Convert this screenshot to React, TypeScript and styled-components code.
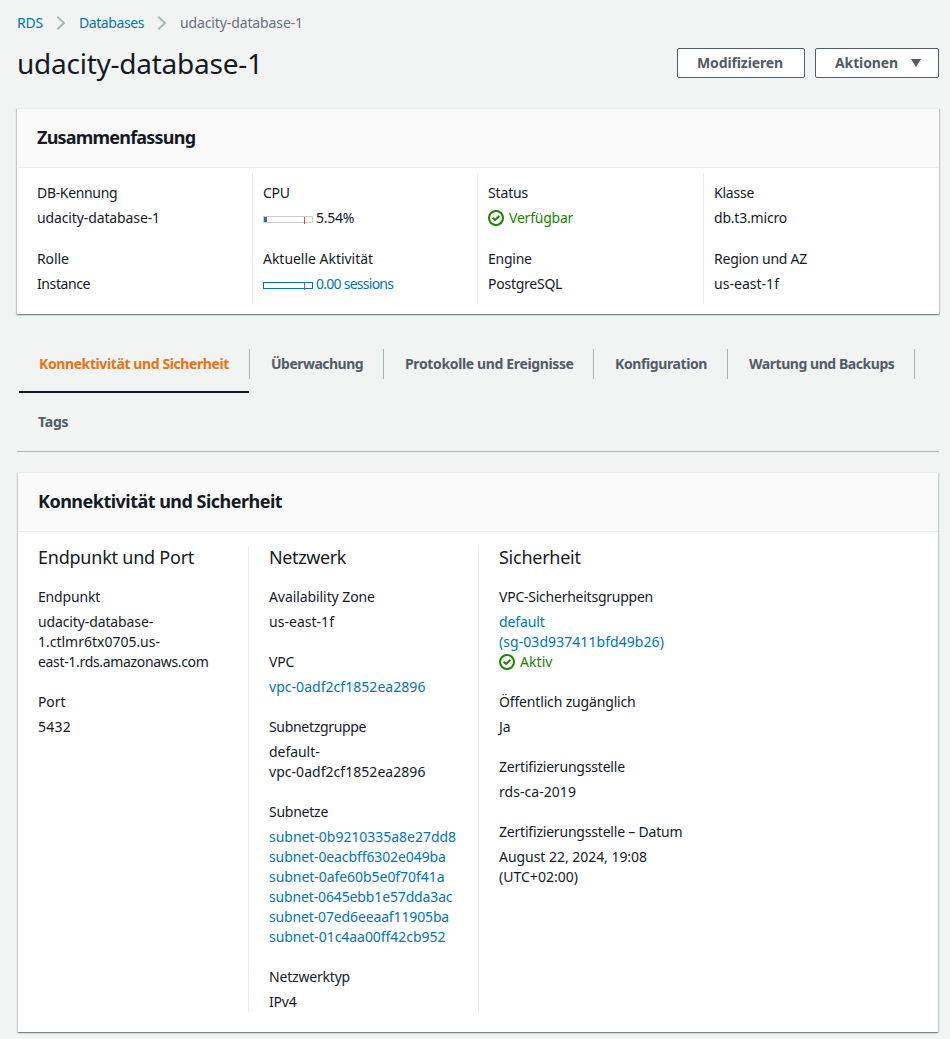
import React from "react";
import styled, { createGlobalStyle, css } from "styled-components";

const GlobalStyle = createGlobalStyle`
  *, *::before, *::after { box-sizing: border-box; }
  body {
    margin: 0;
    background: #f2f3f3;
    color: #16191f;
    font: 400 14px/20px "Noto Sans", "Open Sans", sans-serif;
    font-kerning: normal;
    overflow: hidden;
  }
`;

const Page = styled.main`
  width: 950px;
  height: 1039px;
  padding: 13px 11px 0 17px;
  overflow: hidden;
`;

/* letter-spacing in px, tuned for each label */
type Tracked = { $t?: number };
const tracking = css<Tracked>`
  letter-spacing: ${(p) => p.$t ?? -0.15}px;
`;

const Breadcrumbs = styled.nav`
  display: flex;
  align-items: center;
  height: 20px;
  color: #687078;
`;
const Crumb = styled.span<Tracked & { $link?: boolean; $width?: number }>`
  ${tracking}
  color: ${(p) => (p.$link ? "#0073bb" : "#687078")};
  width: ${(p) => (p.$width ? `${p.$width}px` : "auto")};
  white-space: nowrap;
`;
const CrumbArrow = styled.svg`
  width: 10px;
  height: 16px;
  margin: 0 13px 0 13px;
  flex: none;
`;

const TitleBar = styled.header`
  display: flex;
  justify-content: space-between;
  align-items: center;
  height: 36px;
  margin-top: 12px;
`;
const Title = styled.h1<Tracked>`
  ${tracking}
  margin: 0;
  font-size: 28px;
  line-height: 36px;
  font-weight: 400;
`;
const Actions = styled.div`
  display: flex;
  gap: 10px;
`;
const Button = styled.button<Tracked & { $width: number }>`
  ${tracking}
  display: flex;
  align-items: center;
  gap: 13px;
  width: ${(p) => p.$width}px;
  height: 30px;
  padding: 0 0 0 19px;
  border: 1px solid #545b64;
  border-radius: 2px;
  background: #fff;
  color: #545b64;
  font-family: inherit;
  font-size: 14px;
  font-weight: 700;
  line-height: 20px;
`;
const Caret = styled.svg`
  width: 10px;
  height: 8px;
`;

const Panel = styled.section<{ $inset?: boolean }>`
  margin: ${(p) => (p.$inset ? "20px 1px 0" : "27px 0 0")};
  height: ${(p) => (p.$inset ? 560 : 206)}px;
  border-top: 1px solid #eaeded;
  background: #fff;
  box-shadow:
    0 1px 1px 0 rgba(0, 28, 36, 0.3),
    1px 1px 1px 0 rgba(0, 28, 36, 0.15),
    -1px 1px 1px 0 rgba(0, 28, 36, 0.15);
`;
const PanelHeader = styled.div`
  height: 59px;
  padding: 17px 20px 0;
  border-bottom: 1px solid #eaeded;
  background: #fafafa;
`;
const PanelTitle = styled.h2<Tracked>`
  ${tracking}
  margin: 0;
  font-size: 18px;
  line-height: 22px;
  font-weight: 700;
`;

const SummaryGrid = styled.div`
  display: grid;
  grid-template-columns: 225px 225px 226px 226px;
  padding: 5px 10px 0;
`;
const SummaryColumn = styled.div`
  height: 131px;
  padding: 10px 10px 0;
  display: flex;
  flex-direction: column;
  gap: 21px;
  & + & { border-left: 1px solid #eaeded; }
`;

const DetailGrid = styled.div`
  display: grid;
  grid-template-columns: 230px 230px 230px;
  padding-top: 14px;
`;
const DetailColumn = styled.div`
  height: 466px;
  padding: 0 0 0 20px;
  display: flex;
  flex-direction: column;
  gap: 20px;
  & + & { border-left: 1px solid #eaeded; }
`;
const DetailHeading = styled.h3<Tracked>`
  ${tracking}
  margin: 0 0 -1px;
  font-size: 18px;
  line-height: 22px;
  font-weight: 400;
`;

const Field = styled.div`
  display: flex;
  flex-direction: column;
`;
const Label = styled.div<Tracked>`
  ${tracking}
  margin-bottom: 5px;
  white-space: nowrap;
`;
const tones = { text: "#16191f", link: "#0073bb", ok: "#1d8102" };
const Value = styled.div<Tracked & { $tone?: keyof typeof tones }>`
  ${tracking}
  display: flex;
  align-items: center;
  height: 20px;
  color: ${(p) => tones[p.$tone ?? "text"]};
  white-space: nowrap;
`;

const StatusIcon = styled.svg`
  width: 16px;
  height: 16px;
  margin-right: 5px;
  flex: none;
`;
const Meter = styled.svg`
  width: 50px;
  height: 8px;
  margin: 4px 3px 0 0;
  flex: none;
`;

const Tabs = styled.div`
  display: flex;
  flex-wrap: wrap;
  height: 117px;
  margin-top: 21px;
  padding-left: 2px;
  border-bottom: 1px solid #aab7b8;
`;
const Tab = styled.div<Tracked & { $width: number; $active?: boolean }>`
  ${tracking}
  display: flex;
  align-items: center;
  width: ${(p) => p.$width}px;
  height: 58px;
  color: ${(p) => (p.$active ? "#ec7211" : "#545b64")};
  font-weight: 700;
  white-space: nowrap;
  box-shadow: ${(p) => (p.$active ? "inset -1px 0 #f2f3f3, inset 0 -2px #16191f" : "none")};
`;
const TabLabel = styled.span<{ $divided?: boolean; $pad: number }>`
  flex: 1;
  height: 30px;
  line-height: 30px;
  padding-left: ${(p) => p.$pad}px;
  border-right: ${(p) => (p.$divided ? "1px solid #aab7b8" : "0")};
`;

const Chevron = () => (
  <CrumbArrow viewBox="0 0 10 16" fill="none" stroke="#aab7b8" strokeWidth="2">
    <path d="M1.3 1.8 8 8 1.3 14.2" />
  </CrumbArrow>
);

const Check = () => (
  <StatusIcon viewBox="0 0 16 16" fill="none" stroke="#1d8102" strokeWidth="2">
    <circle cx="8" cy="8" r="7" />
    <path d="m4.6 7.8 2.5 2.2 4.2-4" />
  </StatusIcon>
);

const Usage = ({ color, fill = 0 }: { color: string; fill?: number }) => (
  <Meter viewBox="0 0 50 8" shapeRendering="crispEdges">
    <rect x="0.5" y="0.5" width="49" height="6" fill="#fff" stroke={color} />
    {fill > 0 && <rect x="1" y="1" width={fill} height="5" fill="#44678d" />}
    <rect x="41" y="1" width="1" height="7" fill="#e0464f" />
  </Meter>
);

type Line = [text: string, track: number, tone?: keyof typeof tones];
const Item = ({ label, track, lines }: { label: string; track: number; lines: Line[] }) => (
  <Field>
    <Label $t={track}>{label}</Label>
    {lines.map(([text, t, tone]) => (
      <Value key={text} $t={t} $tone={tone}>
        {tone === "ok" && <Check />}
        {text}
      </Value>
    ))}
  </Field>
);

export default function App() {
  return (
    <>
      <GlobalStyle />
      <Page>
        <Breadcrumbs>
          <Crumb $link $t={-0.2} $width={26}>RDS</Crumb>
          <Chevron />
          <Crumb $link $t={-0.42} $width={65}>Databases</Crumb>
          <Chevron />
          <Crumb $t={-0.12}>udacity-database-1</Crumb>
        </Breadcrumbs>
        <TitleBar>
          <Title $t={-0.25}>udacity-database-1</Title>
          <Actions>
            <Button $width={128} $t={-0.12}>Modifizieren</Button>
            <Button $width={124} $t={-0.12}>
              Aktionen
              <Caret viewBox="0 0 10 8"><path d="M0 0h10L5 8z" fill="#545b64" /></Caret>
            </Button>
          </Actions>
        </TitleBar>

        <Panel>
          <PanelHeader>
            <PanelTitle $t={-0.79}>Zusammenfassung</PanelTitle>
          </PanelHeader>
          <SummaryGrid>
            <SummaryColumn>
              <Item label="DB-Kennung" track={-0.34} lines={[["udacity-database-1", -0.12]]} />
              <Item label="Rolle" track={-0.1} lines={[["Instance", -0.4]]} />
            </SummaryColumn>
            <SummaryColumn>
              <Field>
                <Label $t={-0.3}>CPU</Label>
                <Value $t={-0.28}><Usage color="#ccc" fill={3} />5.54%</Value>
              </Field>
              <Field>
                <Label $t={-0.03}>Aktuelle Aktivität</Label>
                <Value $t={-0.74} $tone="link"><Usage color="#0073bb" />0.00 sessions</Value>
              </Field>
            </SummaryColumn>
            <SummaryColumn>
              <Item label="Status" track={-0.15} lines={[["Verfügbar", -0.22, "ok"]]} />
              <Item label="Engine" track={-0.25} lines={[["PostgreSQL", -0.25]]} />
            </SummaryColumn>
            <SummaryColumn>
              <Item label="Klasse" track={-0.22} lines={[["db.t3.micro", -0.2]]} />
              <Item label="Region und AZ" track={-0.23} lines={[["us-east-1f", 0.03]]} />
            </SummaryColumn>
          </SummaryGrid>
        </Panel>

        <Tabs>
          <Tab $width={231} $t={-0.4} $active><TabLabel $pad={20} $divided>Konnektivität und Sicherheit</TabLabel></Tab>
          <Tab $width={134} $t={-0.52}><TabLabel $pad={21} $divided>Überwachung</TabLabel></Tab>
          <Tab $width={210} $t={-0.36}><TabLabel $pad={21} $divided>Protokolle und Ereignisse</TabLabel></Tab>
          <Tab $width={134} $t={-0.4}><TabLabel $pad={21} $divided>Konfiguration</TabLabel></Tab>
          <Tab $width={187} $t={-0.45}><TabLabel $pad={21} $divided>Wartung und Backups</TabLabel></Tab>
          <Tab $width={80} $t={-0.2}><TabLabel $pad={19}>Tags</TabLabel></Tab>
        </Tabs>

        <Panel $inset>
          <PanelHeader>
            <PanelTitle $t={-0.52}>Konnektivität und Sicherheit</PanelTitle>
          </PanelHeader>
          <DetailGrid>
            <DetailColumn>
              <DetailHeading $t={-0.23}>Endpunkt und Port</DetailHeading>
              <Item
                label="Endpunkt"
                track={-0.18}
                lines={[
                  ["udacity-database-", -0.12],
                  ["1.ctlmr6tx0705.us-", -0.01],
                  ["east-1.rds.amazonaws.com", -0.33],
                ]}
              />
              <Item label="Port" track={-0.1} lines={[["5432", 0.24]]} />
            </DetailColumn>
            <DetailColumn>
              <DetailHeading $t={-0.38}>Netzwerk</DetailHeading>
              <Item label="Availability Zone" track={-0.08} lines={[["us-east-1f", 0.03]]} />
              <Item label="VPC" track={-0.2} lines={[["vpc-0adf2cf1852ea2896", 0.04, "link"]]} />
              <Item
                label="Subnetzgruppe"
                track={-0.32}
                lines={[["default-", -0.05], ["vpc-0adf2cf1852ea2896", 0.04]]}
              />
              <Item
                label="Subnetze"
                track={-0.25}
                lines={[
                  ["subnet-0b9210335a8e27dd8", -0.03, "link"],
                  ["subnet-0eacbff6302e049ba", -0.1, "link"],
                  ["subnet-0afe60b5e0f70f41a", -0.05, "link"],
                  ["subnet-0645ebb1e57dda3ac", -0.14, "link"],
                  ["subnet-07ed6eeaaf11905ba", -0.14, "link"],
                  ["subnet-01c4aa00ff42cb952", -0.05, "link"],
                ]}
              />
              <Item label="Netzwerktyp" track={-0.19} lines={[["IPv4", -0.2]]} />
            </DetailColumn>
            <DetailColumn>
              <DetailHeading $t={-0.26}>Sicherheit</DetailHeading>
              <Item
                label="VPC-Sicherheitsgruppen"
                track={-0.24}
                lines={[
                  ["default", -0.1, "link"],
                  ["(sg-03d937411bfd49b26)", 0.06, "link"],
                  ["Aktiv", 0.05, "ok"],
                ]}
              />
              <Item label="Öffentlich zugänglich" track={-0.16} lines={[["Ja", 0]]} />
              <Item label="Zertifizierungsstelle" track={-0.2} lines={[["rds-ca-2019", 0.05]]} />
              <Item
                label="Zertifizierungsstelle – Datum"
                track={-0.2}
                lines={[["August 22, 2024, 19:08", -0.04], ["(UTC+02:00)", 0.02]]}
              />
            </DetailColumn>
          </DetailGrid>
        </Panel>
      </Page>
    </>
  );
}
